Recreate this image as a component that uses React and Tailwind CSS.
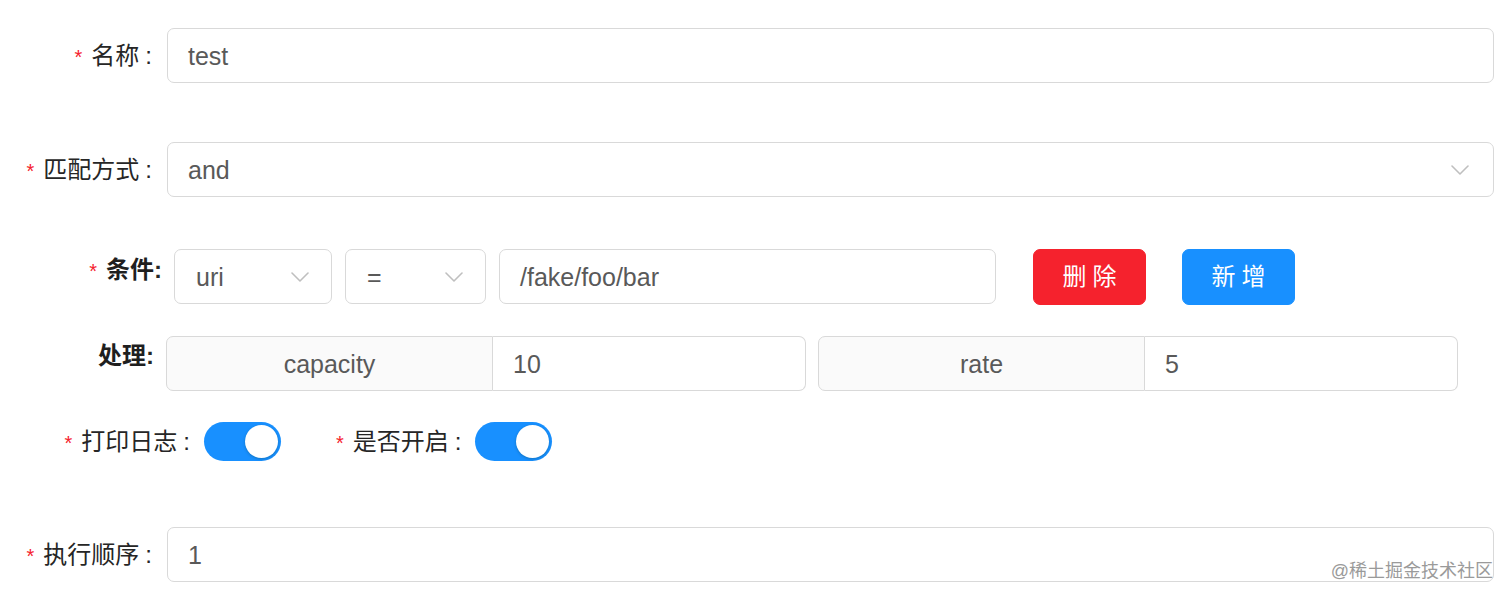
import React from 'react'

const font = { fontFamily: '"Liberation Sans", "Noto Sans CJK SC", sans-serif' }

function Chevron() {
  return (
    <svg width="18" height="10" viewBox="0 0 18 10" fill="none" className="shrink-0">
      <path d="M1 1l8 8 8-8" stroke="#bfbfbf" strokeWidth="1.6" strokeLinecap="round" strokeLinejoin="round" />
    </svg>
  )
}

function Label({ text, width, required = true, bold = false }) {
  return (
    <div className="flex justify-end items-center shrink-0 text-[24px] text-[#262626]" style={{ width }}>
      {required && <span className="text-[#f5222d] text-[20px] mr-[9px] leading-none pt-[2px]">*</span>}
      <span className={bold ? 'font-semibold text-[#1f1f1f]' : ''}>{text}</span>
      <span className={bold ? 'font-semibold' : 'ml-[6px]'}>:</span>
    </div>
  )
}

function Input({ value, className = '' }) {
  return (
    <div className={`h-[55px] border border-[#d9d9d9] rounded-[7px] bg-white flex items-center px-[20px] pt-[3px] text-[25px] text-[#595959] ${className}`}>
      {value}
    </div>
  )
}

function Select({ value, className = '', pad = 'px-[20px]' }) {
  return (
    <div className={`h-[55px] border border-[#d9d9d9] rounded-[7px] bg-white flex items-center justify-between ${pad} text-[25px] text-[#595959] ${className}`}>
      <span className="pt-[3px]">{value}</span>
      <Chevron />
    </div>
  )
}

function Switch() {
  return (
    <div className="w-[77px] h-[39px] rounded-full bg-[#1890ff] flex items-center justify-end px-[3px] shrink-0">
      <div className="w-[33px] h-[33px] rounded-full bg-white shadow-[0_1px_3px_rgba(0,35,11,0.25)]" />
    </div>
  )
}

function AddonGroup({ addon, value }) {
  return (
    <div className="flex h-[55px]">
      <div className="w-[327px] border border-[#d9d9d9] rounded-l-[7px] bg-[#fafafa] flex items-center justify-center pt-[3px] text-[25px] text-[#595959]">
        {addon}
      </div>
      <div className="w-[313px] border border-l-0 border-[#d9d9d9] rounded-r-[7px] bg-white flex items-center px-[20px] pt-[3px] text-[25px] text-[#595959]">
        {value}
      </div>
    </div>
  )
}

export default function App() {
  return (
    <div className="w-[1512px] h-[599px] bg-white relative overflow-hidden" style={font}>
      <div className="pt-[28px] flex flex-col">
        <div className="flex items-center gap-[15px]">
          <Label text="名称" width={152} />
          <Input value="test" className="w-[1327px]" />
        </div>

        <div className="flex items-center gap-[15px] mt-[59px]">
          <Label text="匹配方式" width={152} />
          <Select value="and" className="w-[1327px]" pad="pl-[20px] pr-[24px]" />
        </div>

        <div className="flex items-start mt-[52px]">
          <div className="pt-[3px]">
            <Label text="条件" width={162} bold />
          </div>
          <div className="flex items-center ml-[12px] gap-[13px]">
            <Select value="uri" className="w-[158px]" pad="pl-[21px] pr-[22px]" />
            <Select value="=" className="w-[141px]" pad="pl-[21px] pr-[22px]" />
            <Input value="/fake/foo/bar" className="w-[497px]" />
          </div>
          <button className="ml-[37px] w-[113px] h-[56px] rounded-[7px] bg-[#f5222d] border border-[#f5222d] text-white text-[24px] tracking-[6px] pl-[6px]">
            删除
          </button>
          <button className="ml-[36px] w-[113px] h-[56px] rounded-[7px] bg-[#1890ff] border border-[#1890ff] text-white text-[24px] tracking-[6px] pl-[6px]">
            新增
          </button>
        </div>

        <div className="flex items-start mt-[31px]">
          <div className="pt-[2px]">
            <Label text="处理" width={154} required={false} bold />
          </div>
          <div className="flex ml-[12px] gap-[12px]">
            <AddonGroup addon="capacity" value="10" />
            <AddonGroup addon="rate" value="5" />
          </div>
        </div>

        <div className="flex items-center mt-[31px]">
          <Label text="打印日志" width={190} />
          <div className="ml-[14px]">
            <Switch />
          </div>
          <div className="ml-[55px] flex items-center text-[24px] text-[#262626]">
            <span className="text-[#f5222d] text-[20px] mr-[9px] leading-none pt-[2px]">*</span>
            <span>是否开启</span>
            <span className="ml-[6px]">:</span>
          </div>
          <div className="ml-[14px]">
            <Switch />
          </div>
        </div>

        <div className="flex items-center gap-[15px] mt-[66px]">
          <Label text="执行顺序" width={152} />
          <Input value="1" className="w-[1327px]" />
        </div>
      </div>

      <div className="absolute right-[19px] bottom-[19px] text-[18px] text-[#9a9a9a] leading-none">
        @稀土掘金技术社区
      </div>
    </div>
  )
}
